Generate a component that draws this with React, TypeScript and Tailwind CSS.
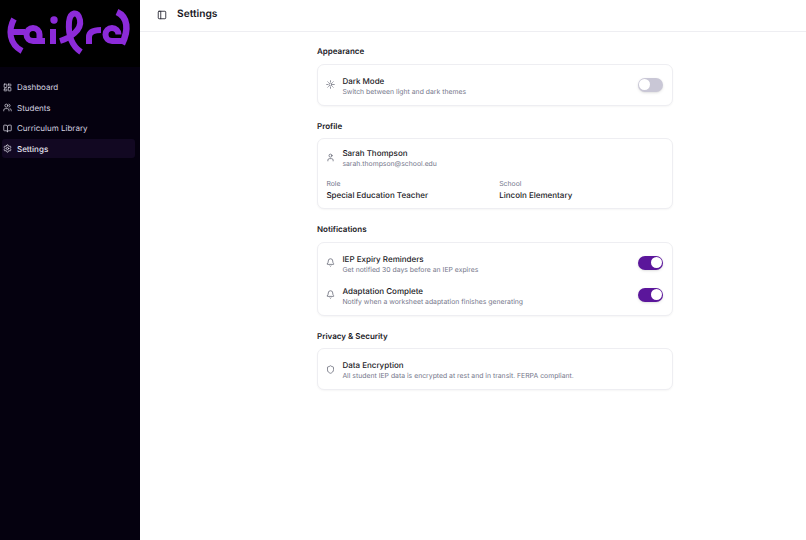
import { Bell, BookOpen, LayoutDashboard, PanelLeft, Settings, Shield, Sun, User, Users } from "lucide-react";
import type { ReactNode } from "react";

function Toggle({ on }: { on: boolean }) {
  return (
    <div className={on ? "flex h-[14px] w-[25.5px] items-center justify-end rounded-full bg-[#5b169b] px-[1.5px] shadow-sm" : "flex h-[14px] w-[25.5px] items-center justify-start rounded-full bg-[#c9c7d6] px-[1.5px] shadow-sm"}>
      <div className="h-[11px] w-[11px] rounded-full bg-white" />
    </div>
  );
}

function Card({ children }: { children: ReactNode }) {
  return <div className="mt-[6.8px] rounded-[7px] border border-[#eeeef2] bg-white pt-[8px] pr-[9px] pb-[8px] pl-[8.4px] shadow-[0_1px_2px_rgba(0,0,0,0.04)]">{children}</div>;
}

function Row({ icon, title, sub, toggle }: { icon: ReactNode; title: string; sub: string; toggle?: boolean }) {
  return (
    <div className="flex items-center gap-[7px]">
      <div className="flex w-[9px] justify-center text-[#5f6170]">{icon}</div>
      <div className="flex-1 pt-[1.5px]">
        <div className="text-[8px] leading-[12px] font-medium text-[#1b1a26]">{title}</div>
        <div className="text-[6.85px] leading-[10px] text-[#74768a]">{sub}</div>
      </div>
      {toggle !== undefined && <Toggle on={toggle} />}
    </div>
  );
}

function Heading({ children }: { children: ReactNode }) {
  return <h2 className="mt-[14px] text-[8px] leading-[12px] font-semibold text-[#1b1a26] first:mt-0">{children}</h2>;
}

function Logo() {
  return (
    <svg width="140" height="67" viewBox="0 0 140 67" fill="none" stroke="#8c2bd9" strokeWidth="6" role="img" aria-label="tailrd logo">
      <path d="M14 19 C8 30 9 44 22 51" />
      <path d="M9 32 H25" />
      <path d="M45 41 H33 A6.5 6.5 0 1 1 39.5 34.5 V44" />
      <path d="M53 29 V44" />
      <circle cx="54" cy="20" r="3.7" fill="#8c2bd9" stroke="none" />
      <path d="M60 41 C70 38 82 30 80 20 C78 10 70 12 69 22 C68 36 72 46 81 52" />
      <path d="M89 44 V37 C89 32 94 30 101 30" />
      <path d="M124 41 H112 A6.5 6.5 0 1 1 118.5 34.5" />
      <path d="M117 12 C128 17 129 30 122 44" strokeWidth="6.5" />
    </svg>
  );
}

const nav = [
  { label: "Dashboard", icon: <LayoutDashboard size={9} /> },
  { label: "Students", icon: <Users size={9} /> },
  { label: "Curriculum Library", icon: <BookOpen size={9} /> },
  { label: "Settings", icon: <Settings size={9} />, active: true },
];

export default function App() {
  return (
    <div className="flex h-[540px] w-[806px] overflow-hidden bg-white font-['Inter',sans-serif] antialiased [text-rendering:geometricPrecision]">
      <aside className="w-[140px] shrink-0 bg-[#05010f]">
        <div className="h-[67px] bg-black"><Logo /></div>
        <nav className="flex flex-col gap-[1.5px] pt-[10.8px] pr-[5px] pl-[2px]">
          {nav.map((n) => (
            <div key={n.label} className={n.active ? "flex h-[19px] items-center gap-[5px] rounded-[3px] bg-[#120822] px-[1px] text-[8px] font-medium text-[#e6e4ee]" : "flex h-[19px] items-center gap-[5px] rounded-[3px] px-[1px] text-[8px] text-[#d6d4e0]"}>
              {n.icon}
              <span>{n.label}</span>
            </div>
          ))}
        </nav>
      </aside>
      <main className="flex-1">
        <header className="flex h-[32px] items-center gap-[10px] border-b border-[#eeeef2] pb-[1px] pl-[17px]">
          <PanelLeft size={10} className="text-[#1b1a26]" />
          <h1 className="text-[10.2px] font-semibold text-[#1b1a26]">Settings</h1>
        </header>
        <div className="ml-[177px] w-[356px] pt-[13.3px]">
          <Heading>Appearance</Heading>
          <Card><Row icon={<Sun size={9} />} title="Dark Mode" sub="Switch between light and dark themes" toggle={false} /></Card>
          <Heading>Profile</Heading>
          <Card>
            <div className="-mt-[1.5px]"><Row icon={<User size={9} />} title="Sarah Thompson" sub="sarah.thompson@school.edu" /></div>
            <div className="mt-[9.5px] mb-[-0.7px] grid grid-cols-2 gap-[9px]">
              <div><div className="text-[6.85px] leading-[10px] text-[#74768a]">Role</div><div className="text-[8px] leading-[12px] font-medium text-[#1b1a26]">Special Education Teacher</div></div>
              <div><div className="text-[6.85px] leading-[10px] text-[#74768a]">School</div><div className="text-[8px] leading-[12px] font-medium text-[#1b1a26]">Lincoln Elementary</div></div>
            </div>
          </Card>
          <Heading>Notifications</Heading>
          <Card>
            <div className="flex flex-col gap-[8.5px]">
              <Row icon={<Bell size={9} />} title="IEP Expiry Reminders" sub="Get notified 30 days before an IEP expires" toggle={true} />
              <Row icon={<Bell size={9} />} title="Adaptation Complete" sub="Notify when a worksheet adaptation finishes generating" toggle={true} />
            </div>
          </Card>
          <Heading>Privacy &amp; Security</Heading>
          <Card><Row icon={<Shield size={9} />} title="Data Encryption" sub="All student IEP data is encrypted at rest and in transit. FERPA compliant." /></Card>
        </div>
      </main>
    </div>
  );
}
